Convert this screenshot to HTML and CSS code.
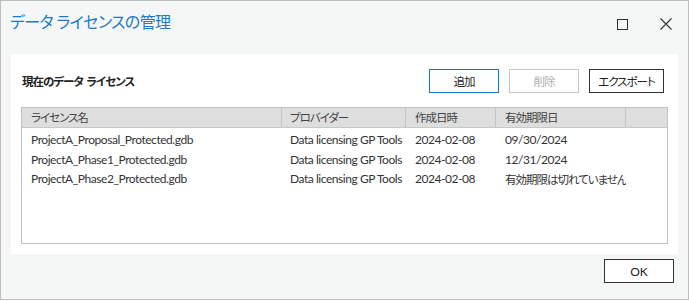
FILE: index.html
```html
<!DOCTYPE html>
<html lang="ja">
<head>
  <meta charset="UTF-8" />
  <title>データ ライセンスの管理</title>
  <link rel="stylesheet" href="styles.css">
</head>
<body>
  <div class="window">
    <div class="titlebar">
      <h1 class="title">データ ライセンスの管理</h1>
      <div class="win-buttons">
        <span class="win-btn">
          <svg width="11" height="11" viewBox="0 0 11 11"><rect x="0.5" y="0.5" width="10" height="10" fill="none" stroke="#333" stroke-width="1"/></svg>
        </span>
        <span class="win-btn">
          <svg width="12" height="12" viewBox="0 0 12 12"><path d="M0.5 0.5 L11.5 11.5 M11.5 0.5 L0.5 11.5" stroke="#333" stroke-width="1.1" fill="none"/></svg>
        </span>
      </div>
    </div>

    <div class="panel">
      <div class="panel-head">
        <h2 class="ja">現在のデータ&nbsp;&nbsp;ライセンス</h2>
        <div class="actions">
          <button class="button primary"><span class="ja">追加</span></button>
          <button class="button" disabled><span class="ja">削除</span></button>
          <button class="button wide"><span class="ja">エクスポート</span></button>
        </div>
      </div>

      <div class="grid">
        <div class="grid-row header">
          <div class="cell c1 ja">ライセンス名</div>
          <div class="cell c2 ja">プロバイダー</div>
          <div class="cell c3 ja">作成日時</div>
          <div class="cell c4 ja">有効期限日</div>
          <div class="cell c5"></div>
        </div>
        <div class="grid-row">
          <div class="cell c1">ProjectA_Proposal_Protected.gdb</div>
          <div class="cell c2">Data licensing GP Tools</div>
          <div class="cell c3">2024-02-08</div>
          <div class="cell c4">09/30/2024</div>
        </div>
        <div class="grid-row">
          <div class="cell c1">ProjectA_Phase1_Protected.gdb</div>
          <div class="cell c2">Data licensing GP Tools</div>
          <div class="cell c3">2024-02-08</div>
          <div class="cell c4">12/31/2024</div>
        </div>
        <div class="grid-row">
          <div class="cell c1">ProjectA_Phase2_Protected.gdb</div>
          <div class="cell c2">Data licensing GP Tools</div>
          <div class="cell c3">2024-02-08</div>
          <div class="cell c4 ja">有効期限は切れていません</div>
        </div>
      </div>
    </div>

    <div class="footer">
      <button class="button dark">OK</button>
    </div>
  </div>
</body>
</html>
```

FILE: styles.css
```css
* {
  box-sizing: border-box;
  margin: 0;
  padding: 0;
}

body {
  font-family: 'Lato', 'Noto Sans CJK JP', sans-serif;
  font-feature-settings: "palt";
  font-size: 12px;
  color: #222;
  background: #f5f7f6;
}

.ja {
  font-size: 11.5px;
  letter-spacing: -1px;
}

.window {
  width: 689px;
  height: 300px;
  border: 1px solid #bdbdbd;
  background: #f5f7f6;
  display: flex;
  flex-direction: column;
}

.titlebar {
  height: 53px;
  display: flex;
  justify-content: space-between;
  align-items: flex-start;
  padding: 9px 0 0 9px;
}

.title {
  font-size: 16px;
  font-weight: 400;
  color: #1e7ac8;
  line-height: 24px;
  letter-spacing: -0.6px;
}

.win-buttons {
  display: flex;
  gap: 32px;
  padding: 8px 16px 0 0;
}

.win-btn {
  display: flex;
  align-items: center;
  justify-content: center;
  height: 12px;
}

.panel {
  margin: 0 10px 0 10px;
  height: 200px;
  background: #ffffff;
  padding: 14px 10px 10px 10px;
}

.panel-head {
  display: flex;
  justify-content: space-between;
  align-items: center;
  height: 25px;
  margin-bottom: 14px;
}

.panel-head h2 {
  font-weight: 700;
  color: #222;
  padding: 0 0 0 1px;
}

.actions {
  display: flex;
  gap: 10px;
  padding-right: 4px;
}

.button {
  font-family: inherit;
  font-feature-settings: "palt";
  font-size: 12px;
  width: 70px;
  height: 24px;
  background: #ffffff;
  color: #222;
  border: 1px solid #333;
  padding: 0;
}

.button.primary {
  border: 1px solid #0a78d4;
}

.button:disabled {
  border-color: #c8c8c8;
  color: #b0b0b0;
}

.button.wide {
  width: 75px;
}

.grid {
  height: 137px;
  border: 1px solid #c1c1c1;
}

.grid-row {
  display: flex;
  height: 19.6px;
  align-items: center;
}

.grid-row.header {
  height: 20px;
  background: #dedede;
  border-bottom: 1px solid #c8c8c8;
  margin-bottom: 2px;
}

.cell {
  white-space: nowrap;
  overflow: hidden;
  padding-left: 9px;
  color: #333;
  letter-spacing: -0.45px;
}

.cell.ja {
  letter-spacing: -1px;
}

.header .cell {
  height: 100%;
  line-height: 19px;
  border-right: 1px solid #c4c4c4;
  color: #444;
}

.header .c5 {
  border-right: 0;
}

.c1 { width: 260px; }
.c2 { width: 124px; padding-left: 8px; }
.c3 { width: 90px; }
.c4 { width: 130px; }
.c5 { flex: 1; }

.footer {
  display: flex;
  justify-content: flex-end;
  padding: 5px 14px 0 0;
}
```
